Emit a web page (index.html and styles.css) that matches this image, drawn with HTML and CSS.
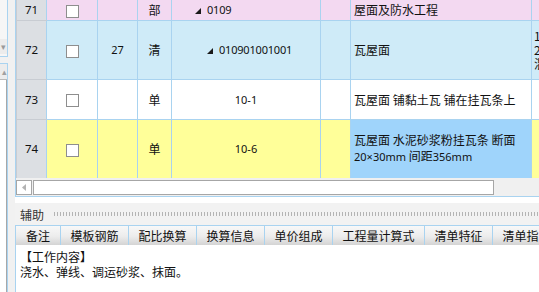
FILE: index.html
```html
<!DOCTYPE html>
<html lang="zh-CN">
<head>
    <meta charset="UTF-8">
    <title>定额组价</title>
    <link rel="stylesheet" href="styles.css">
</head>
<body>
    <div class="app">
        <div class="side">
            <div class="side-combo">
                <div class="side-drop">&#9662;</div>
            </div>
            <div class="side-list">
                <div class="side-arrow">&#9652;</div>
                <div class="side-track"></div>
            </div>
        </div>

        <div class="main">
            <div class="grid-wrap">
                <table class="grid">
                    <colgroup>
                        <col class="c-no">
                        <col class="c-chk">
                        <col class="c-qty">
                        <col class="c-type">
                        <col class="c-code">
                        <col class="c-blank">
                        <col class="c-name">
                        <col class="c-feat">
                    </colgroup>
                    <tr class="row-fb">
                        <td class="no">71</td>
                        <td class="chk"><span class="box"></span></td>
                        <td></td>
                        <td class="ctr">部</td>
                        <td class="code lvl1"><svg class="tri" viewBox="0 0 6 6"><polygon points="6,0 6,6 0,6"/></svg>0109</td>
                        <td></td>
                        <td class="name">屋面及防水工程</td>
                        <td></td>
                    </tr>
                    <tr class="row-qd">
                        <td class="no">72</td>
                        <td class="chk"><span class="box"></span></td>
                        <td class="ctr num">27</td>
                        <td class="ctr">清</td>
                        <td class="code lvl2"><svg class="tri" viewBox="0 0 6 6"><polygon points="6,0 6,6 0,6"/></svg>010901001001</td>
                        <td></td>
                        <td class="name">瓦屋面</td>
                        <td class="feat">1.瓦品种<br>2.砂浆<br>混合</td>
                    </tr>
                    <tr class="row-de">
                        <td class="no">73</td>
                        <td class="chk"><span class="box"></span></td>
                        <td></td>
                        <td class="ctr">单</td>
                        <td class="ctr num">10-1</td>
                        <td></td>
                        <td class="name">瓦屋面 铺黏土瓦 铺在挂瓦条上</td>
                        <td></td>
                    </tr>
                    <tr class="row-hl">
                        <td class="no">74</td>
                        <td class="chk"><span class="box"></span></td>
                        <td></td>
                        <td class="ctr">单</td>
                        <td class="ctr num">10-6</td>
                        <td></td>
                        <td class="name sel">瓦屋面 水泥砂浆粉挂瓦条 断面<br><span class="lat">20×30mm</span> 间距<span class="lat">356mm</span></td>
                        <td></td>
                    </tr>
                </table>
            </div>

            <div class="hscroll">
                <div class="hs-btn"><svg viewBox="0 0 4 7"><polygon points="4,0 4,7 0,3.5"/></svg></div>
                <div class="hs-track"></div>
            </div>

            <div class="aux">
                <div class="aux-head">
                    <span class="aux-title">辅助</span>
                    <span class="grip"></span>
                </div>
                <div class="tabs">
                    <div class="tab t-bz">备注</div>
                    <div class="tab t-4">模板钢筋</div>
                    <div class="tab t-4">配比换算</div>
                    <div class="tab t-4">换算信息</div>
                    <div class="tab t-4">单价组成</div>
                    <div class="tab t-6">工程量计算式</div>
                    <div class="tab t-4">清单特征</div>
                    <div class="tab t-4">清单指引</div>
                </div>
                <div class="aux-body">
                    <div>【工作内容】</div>
                    <div>浇水、弹线、调运砂浆、抹面。</div>
                </div>
            </div>
        </div>
    </div>
</body>
</html>
```

FILE: styles.css
```css
*,
*::before,
*::after {
    box-sizing: border-box;
    margin: 0;
    padding: 0;
}

body {
    width: 539px;
    height: 292px;
    overflow: hidden;
    background: #ffffff;
    font-family: "Noto Sans CJK SC", "Noto Sans", sans-serif;
    font-size: 12px;
    color: #111111;
}

.app {
    display: flex;
    height: 292px;
}

/* left strip (cut off panel) */
.side {
    width: 15px;
    flex: none;
    background: #f1f1f1;
    display: flex;
    flex-direction: column;
}

.side-combo {
    width: 8px;
    height: 57px;
    background: #f6f6f6;
    border-right: 1px solid #a9d3f0;
    border-bottom: 1px solid #a9d3f0;
    display: flex;
    align-items: flex-end;
}

.side-drop {
    width: 7px;
    height: 15px;
    margin-bottom: 2px;
    background: #ececec;
    color: #9a9a9a;
    font-size: 9px;
    line-height: 15px;
    text-align: right;
    padding-right: 1px;
}

.side-list {
    margin-top: 6px;
    width: 8px;
    flex: 1;
    border-top: 1px solid #a9d3f0;
    border-right: 1px solid #a9d3f0;
    display: flex;
    flex-direction: column;
}

.side-arrow {
    height: 16px;
    width: 7px;
    background: #ececec;
    border-bottom: 1px solid #b9b9b9;
    color: #a0a0a0;
    font-size: 9px;
    line-height: 16px;
    text-align: right;
}

.side-track {
    flex: 1;
    width: 7px;
    background: #ffffff;
    border-right: 1px solid #a8a8a8;
}

/* main area */
.main {
    flex: 1;
    min-width: 0;
    display: flex;
    flex-direction: column;
    overflow: hidden;
}

.grid-wrap {
    height: 178px;
    overflow: hidden;
    border-left: 1px solid #a9d3f0;
}

.grid {
    border-collapse: collapse;
    table-layout: fixed;
    width: 575px;
}

.c-no { width: 30px; }
.c-chk { width: 51px; }
.c-qty { width: 40px; }
.c-type { width: 34px; }
.c-code { width: 149px; }
.c-blank { width: 30px; }
.c-name { width: 181px; }
.c-feat { width: 60px; }

.grid td {
    border: 1px solid #a9d3f0;
    border-top: none;
    padding: 0;
    white-space: nowrap;
    overflow: hidden;
    vertical-align: middle;
    line-height: 15px;
}

.row-fb td { height: 20px; background: #f3d9f1; }
.row-qd td { height: 59px; background: #cfebf8; }
.row-de td { height: 40px; background: #ffffff; }
.row-hl td { height: 59px; background: #ffff99; }

.grid td.no {
    background: #dcdfe3;
    border-color: #c8ccd2;
    border-right-color: #a9d3f0;
    text-align: center;
    font-family: "Noto Sans", sans-serif;
    font-size: 11.5px;
}

.grid td.chk,
.grid td.ctr {
    text-align: center;
}

.grid td.num,
.grid td.code {
    font-family: "Noto Sans", sans-serif;
    font-size: 11px;
}

.box {
    display: inline-block;
    width: 13px;
    height: 13px;
    background: #ffffff;
    border: 1px solid #8e8e8e;
    vertical-align: middle;
}

.grid td.code {
    letter-spacing: -0.2px;
}

.grid td.lvl1 { padding-left: 23px; }
.grid td.lvl2 { padding-left: 35px; }

.tri {
    width: 6px;
    height: 6px;
    margin-right: 6px;
    vertical-align: 0;
    fill: #1a1a1a;
}

.grid td.name {
    padding-left: 3px;
    font-size: 12px;
}

.lat {
    font-family: "Noto Sans", sans-serif;
    font-size: 11px;
}

.grid td.sel {
    background: #9fd4fb;
    line-height: 16px;
}

.grid td.feat {
    padding-left: 2px;
    line-height: 14px;
    font-size: 12px;
}

/* horizontal scroll bar */
.hscroll {
    height: 19px;
    display: flex;
    align-items: center;
    padding: 2px 45px 2px 0;
    background: #f0f0f0;
    border-left: 1px solid #a9d3f0;
    border-bottom: 1px solid #a9d3f0;
}

.hs-btn {
    width: 16px;
    height: 15px;
    background: #ffffff;
    border: 1px solid #a6a6a6;
    display: flex;
    align-items: center;
    justify-content: center;
}

.hs-btn svg {
    width: 4px;
    height: 7px;
    fill: #b3b3b3;
}

.hs-track {
    flex: 1;
    height: 15px;
    margin-left: 1px;
    background: #ffffff;
    border: 1px solid #a6a6a6;
}

/* auxiliary panel */
.aux {
    flex: 1;
    margin-top: 6px;
    background: #f2f2f2;
    display: flex;
    flex-direction: column;
}

.aux-head {
    height: 22px;
    display: flex;
    align-items: center;
    padding-left: 5px;
    color: #333333;
}

.aux-title {
    font-size: 12px;
    margin-right: 9px;
}

.grip {
    flex: 1;
    height: 4px;
    background-image: radial-gradient(circle, #b4b4b4 0.7px, transparent 0.9px);
    background-size: 3px 2px;
}

.tabs {
    display: flex;
    height: 20px;
    border-top: 1px solid #a9d3f0;
    border-left: 1px solid #a9d3f0;
    white-space: nowrap;
}

.tab {
    flex: none;
    height: 19px;
    line-height: 19px;
    text-align: center;
    font-size: 12px;
    color: #111111;
    background: linear-gradient(#f8f8f8, #ececec 55%, #d4d4d4);
    border-right: 1px solid #a9d3f0;
}

.t-bz { width: 45px; }
.t-4 { width: 68px; }
.t-6 { width: 92px; }

.aux-body {
    flex: 1;
    background: #ffffff;
    border-left: 1px solid #a9d3f0;
    padding: 4px 0 0 4px;
    font-size: 12px;
    line-height: 15px;
    color: #111111;
}
```
